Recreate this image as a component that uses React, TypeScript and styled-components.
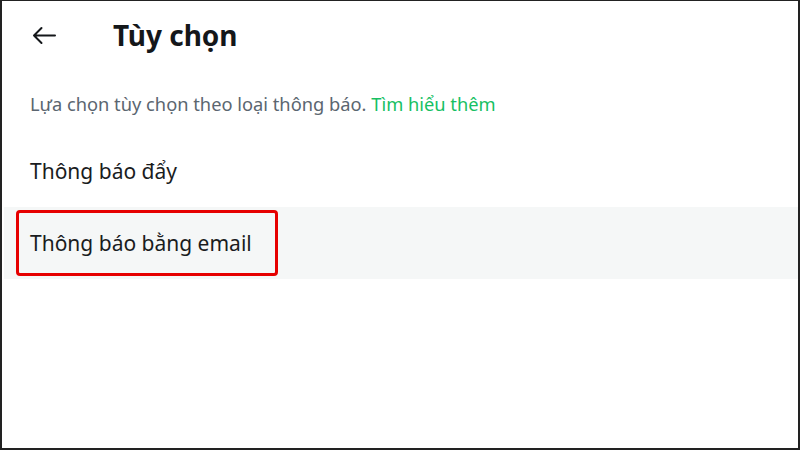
import { createGlobalStyle, styled } from 'styled-components'

const GlobalStyle = createGlobalStyle`
	html, body {
		margin: 0;
		padding: 0;
		background: #ffffff;
	}
	* {
		box-sizing: border-box;
	}
`

type Option = {
	label: string
	highlighted?: boolean
}

const options: Option[] = [
	{ label: 'Thông báo đẩy' },
	{ label: 'Thông báo bằng email', highlighted: true },
]

export default function App() {
	return (
		<>
			<GlobalStyle />
			<Frame>
				<Header>
					<BackButton aria-label="Quay lại">
						<svg width="26" height="26" viewBox="0 0 26 26" fill="none">
							<path
								d="M24 12.5H3M10.5 5L3 12.5L10.5 20"
								stroke="#14171a"
								strokeWidth="2"
								strokeLinecap="round"
								strokeLinejoin="round"
							/>
						</svg>
					</BackButton>
					<Title>Tùy chọn</Title>
				</Header>
				<Description>
					Lựa chọn tùy chọn theo loại thông báo. <Link>Tìm hiểu thêm</Link>
				</Description>
				<OptionList>
					{options.map((option) => (
						<OptionRow key={option.label} highlighted={option.highlighted}>
							<OptionLabel>{option.label}</OptionLabel>
							{option.highlighted ? <Marker /> : null}
						</OptionRow>
					))}
				</OptionList>
			</Frame>
		</>
	)
}

const Frame = styled.div`
	position: relative;
	width: 800px;
	height: 450px;
	border-top: 1px solid #222;
	border-left: 2px solid #222;
	border-right: 2px solid #222;
	border-bottom: 2px solid #222;
	background: #fff;
	font-family: 'Noto Sans', 'Open Sans', sans-serif;
	color: #14171a;
	overflow: hidden;
`

const Header = styled.div`
	display: flex;
	align-items: center;
	height: 70px;
	padding-left: 29px;
`

const BackButton = styled.div`
	display: flex;
	width: 26px;
	height: 26px;
	margin-right: 56px;
`

const Title = styled.h1`
	margin: 0 0 2px 0;
	font-size: 28px;
	font-weight: 700;
	color: #14171a;
`

const Description = styled.p`
	margin: 0;
	padding: 20px 0 0 28px;
	height: 136px;
	font-size: 18.3px;
	color: #5b6670;
`

const Link = styled.span`
	color: #17bf63;
`

const OptionList = styled.div`
	display: flex;
	flex-direction: column;
	margin-top: -72px;
	padding-left: 2px;
`

const OptionRow = styled.div<{ highlighted?: boolean }>`
	position: relative;
	display: flex;
	align-items: center;
	height: 72px;
	padding-left: 26px;
	background: ${({ highlighted }) => (highlighted ? '#f5f7f7' : 'transparent')};
`

const OptionLabel = styled.span`
	font-size: 21px;
	color: #1a1c1e;
`

const Marker = styled.div`
	position: absolute;
	left: 12px;
	top: 3px;
	width: 262px;
	height: 66px;
	border: 3px solid #e60000;
	border-radius: 4px;
`
